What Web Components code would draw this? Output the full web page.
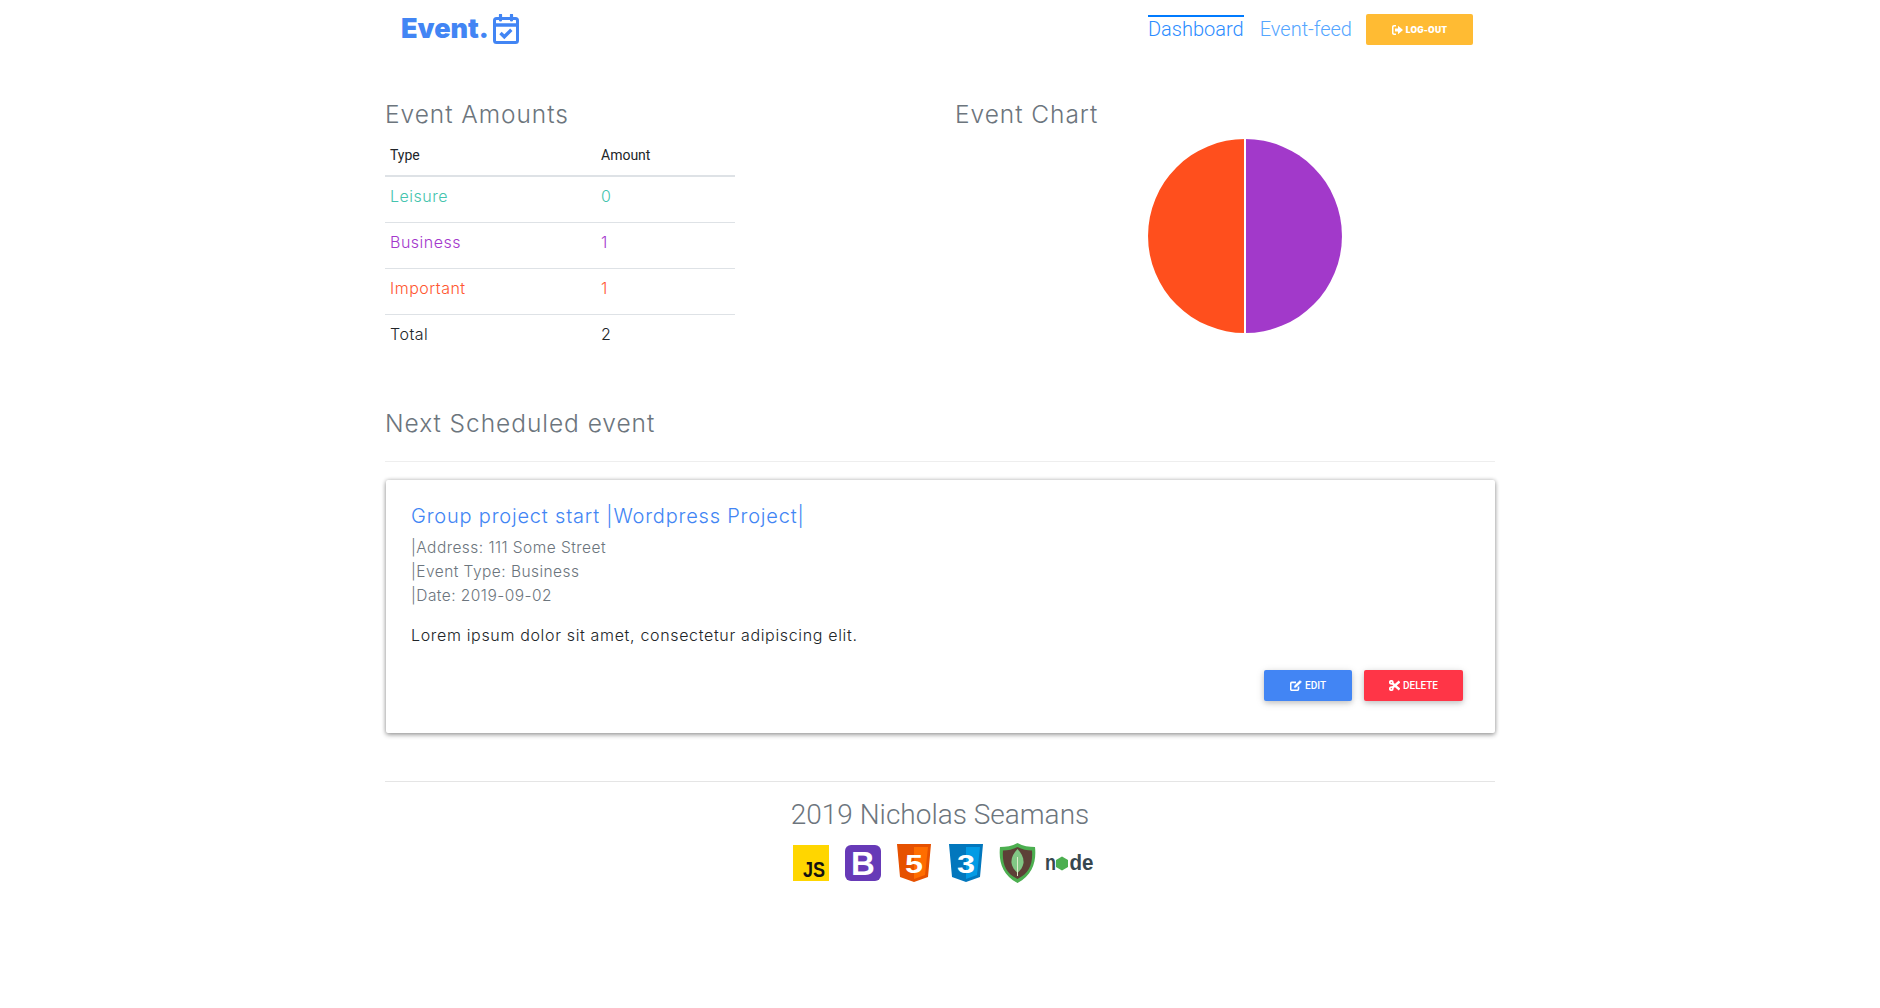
<!DOCTYPE html>
<html lang="en">
<head>
<meta charset="utf-8">
<title>Event.</title>
<style>
  html, body { margin: 0; padding: 0; background: #fff; }
  body { font-family: Inter, "Open Sans", sans-serif; color: #212529; }
</style>
</head>
<body>
<event-page>
  <top-bar slot="top"></top-bar>
  <section-title slot="left">Event Amounts</section-title>
  <amount-table slot="left"></amount-table>
  <section-title slot="right">Event Chart</section-title>
  <pie-chart slot="right"></pie-chart>
  <section-title slot="next">Next Scheduled event</section-title>
  <event-card slot="next">
    <span slot="title">Group project start |Wordpress Project|</span>
    <span slot="meta">|Address: 111 Some Street</span>
    <span slot="meta">|Event Type: Business</span>
    <span slot="meta">|Date: 2019-09-02</span>
    <span slot="body">Lorem ipsum dolor sit amet, consectetur adipiscing elit.</span>
  </event-card>
  <site-footer slot="foot">2019 Nicholas Seamans</site-footer>
</event-page>

<script>
class EventPage extends HTMLElement {
    constructor() {
        super();
        this.root = this.attachShadow({ mode: 'open' });
        this.root.innerHTML = `
            <style>
                :host { display: block; width: 1110px; margin: 0 auto; }
                .cols { display: grid; grid-template-columns: 540px 540px; column-gap: 30px; margin-top: 41px; height: 309px; }
                .next { display: block; }
            </style>
            <slot name="top"></slot>
            <div class="cols">
                <div><slot name="left"></slot></div>
                <div><slot name="right"></slot></div>
            </div>
            <div class="next"><slot name="next"></slot></div>
            <slot name="foot"></slot>
        `;
    }
}

class TopBar extends HTMLElement {
    constructor() {
        super();
        this.root = this.attachShadow({ mode: 'open' });
        this.root.innerHTML = `
            <style>
                :host { display: flex; align-items: center; justify-content: space-between; height: 59px; padding: 0 22px 0 16px; box-sizing: border-box; }
                .logo { display: flex; align-items: center; gap: 4px; color: #4285f4; font: 900 27px Inter, sans-serif; letter-spacing: 0; margin-top: -2px; }
                nav { display: flex; align-items: center; }
                a { font: 300 20px/24px Roboto, sans-serif; border-top: 2px solid transparent; color: #55a6ff; margin-top: -4px; }
                a.on { border-top-color: #007bff; color: #2b8cff; }
                a + a { margin-left: 16px; }
                button { margin-left: 14px; width: 107px; height: 31px; border: 0; border-radius: 2px; background: #ffbb33; color: #fff; font: 900 8.500px Inter, sans-serif; letter-spacing: .2px; display: flex; align-items: center; justify-content: center; gap: 3px; padding: 0; }
            </style>
            <div class="logo">Event.
                <svg width="26" height="30" viewBox="0 0 26 30" fill="none" stroke="#4285f4" stroke-width="3">
                    <rect x="1.500" y="4.500" width="23" height="24" rx="2"/>
                    <path d="M1.500 11h23" stroke-width="3.500"/>
                    <path d="M7.500 1v5M18.500 1v5" stroke-width="3.200" stroke-linecap="round"/>
                    <path d="M7.500 19l3.800 3.800 7-7" stroke-width="3.400"/>
                </svg>
            </div>
            <nav>
                <a class="on">Dashboard</a>
                <a>Event-feed</a>
                <button>
                    <svg width="11" height="10" viewBox="0 0 11 10" fill="#fff"><path d="M4 0H2C.9 0 0 .9 0 2v6c0 1.100.9 2 2 2h2V8.500H2.200c-.4 0-.7-.3-.7-.7V2.200c0-.4.3-.7.7-.7H4zM6 .8v2.700H3v3h3v2.700L11 5z"/></svg>
                    LOG-OUT
                </button>
            </nav>
        `;
    }
}

class SectionTitle extends HTMLElement {
    constructor() {
        super();
        this.root = this.attachShadow({ mode: 'open' });
        this.root.innerHTML = `
            <style>
                :host { display: block; font: 350 24.500px/29px Inter, sans-serif; letter-spacing: .95px; color: #6c757d; }
            </style>
            <slot></slot>
        `;
    }
}

class AmountTable extends HTMLElement {
    constructor() {
        super();
        this.root = this.attachShadow({ mode: 'open' });
        this.rows = [
            ['Leisure', '0', '#45c4ae'],
            ['Business', '1', '#a438cc'],
            ['Important', '1', '#ff5630'],
            ['Total', '2', '#212529']
        ];
        this.root.innerHTML = `
            <style>
                :host { display: block; width: 350px; margin-top: 7px; }
                .row { display: grid; grid-template-columns: 211px 1fr; padding: 0 0 8px 5px; height: 46px; box-sizing: border-box; align-items: center; border-top: 1px solid #dee2e6; font: 350 16px Inter, sans-serif; letter-spacing: .5px; }
                .head { height: 41px; border-top: 0; border-bottom: 2px solid #dee2e6; font: 400 14px Roboto, sans-serif; letter-spacing: 0; padding-bottom: 1px; }
            </style>
            <div class="row head"><span>Type</span><span>Amount</span></div>
            ${this.rows.map((r, i) => `<div class="row" style="color:${r[2]};${i == 0 ? 'border-top:0;height:45px' : ''}"><span>${r[0]}</span><span>${r[1]}</span></div>`).join('')}
        `;
    }
}

class PieChart extends HTMLElement {
    constructor() {
        super();
        this.root = this.attachShadow({ mode: 'open' });
        this.root.innerHTML = `
            <style>
                :host { display: block; margin: 10px 0 0 192px; width: 196px; height: 196px; }
                svg { display: block; }
            </style>
            <svg width="196" height="196" viewBox="0 0 196 196">
                <path d="M98 97V0A97 97 0 0 0 98 194z" fill="#ff4f1d"/>
                <path d="M98 97V0A97 97 0 0 1 98 194z" fill="#a239ca"/>
                <path d="M98 0v194" stroke="#fff" stroke-width="2"/>
            </svg>
        `;
    }
}

class EventCard extends HTMLElement {
    constructor() {
        super();
        this.root = this.attachShadow({ mode: 'open' });
        this.root.innerHTML = `
            <style>
                :host { display: block; }
                hr { border: 0; border-top: 1px solid #eeeeee; margin: 23px 0 18px; }
                .card { border-radius: 2px; box-shadow: 0 2px 5px rgba(0,0,0,.32), 0 0 4px rgba(0,0,0,.22); padding: 24px 32px 32px 25px; height: 253px; box-sizing: border-box; margin-left: 1px; }
                .title { font: 350 20px/24px Inter, sans-serif; letter-spacing: .8px; color: #4285f4; }
                .meta { margin-top: 8px; display: flex; flex-direction: column; font: 350 15.500px/24px Inter, sans-serif; letter-spacing: .45px; color: #6c757d; }
                .meta ::slotted(span) { display: block; }
                .body { margin-top: 15px; font: 350 16px/24px Inter, sans-serif; letter-spacing: .66px; color: #212529; }
                .actions { display: flex; justify-content: flex-end; gap: 12px; margin-top: 23px; }
                button { height: 31px; border: 0; border-radius: 2px; color: #fff; font: 500 10px Roboto, sans-serif; display: flex; align-items: center; justify-content: center; gap: 3px; padding: 0; box-shadow: 0 2px 5px rgba(0,0,0,.16), 0 2px 10px rgba(0,0,0,.12); }
                .edit { width: 88px; background: #4285f4; }
                .del { width: 99px; background: #ff3547; }
            </style>
            <hr>
            <div class="card">
                <div class="title"><slot name="title"></slot></div>
                <div class="meta"><slot name="meta"></slot></div>
                <div class="body"><slot name="body"></slot></div>
                <div class="actions">
                    <button class="edit">
                        <svg width="12" height="11" viewBox="0 0 12 11" fill="none" stroke="#fff" stroke-width="1.600"><path d="M8.500 6.500V9c0 .8-.5 1.300-1.300 1.300H2C1.200 10.300.7 9.800.7 9V3.700c0-.8.5-1.300 1.300-1.300h4"/><path d="M4.300 7.500V6L10 .4l1.600 1.600L5.700 7.500z" fill="#fff" stroke-width=".4"/></svg>
                        EDIT
                    </button>
                    <button class="del">
                        <svg width="11" height="11" viewBox="0 0 11 11" fill="none" stroke="#fff" stroke-width="1.800"><circle cx="2.300" cy="2.300" r="1.500"/><circle cx="2.300" cy="8.700" r="1.500"/><path d="M3.500 3.300L10.500 9.500M3.500 7.700L10.500 1.500" stroke-width="2.400"/></svg>
                        DELETE
                    </button>
                </div>
            </div>
        `;
    }
}

class SiteFooter extends HTMLElement {
    constructor() {
        super();
        this.root = this.attachShadow({ mode: 'open' });
        this.root.innerHTML = `
            <style>
                :host { display: block; text-align: center; }
                hr { border: 0; border-top: 1px solid #e5e5e5; margin: 48px 0 0; }
                h2 { margin: 16px 0 0; font: 300 28px/34px Roboto, sans-serif; color: #6c757d; }
                tech-icons { margin-top: 10px; }
            </style>
            <hr>
            <h2><slot></slot></h2>
            <tech-icons></tech-icons>
        `;
    }
}

class TechIcons extends HTMLElement {
    constructor() {
        super();
        this.root = this.attachShadow({ mode: 'open' });
        this.root.innerHTML = `
            <style>
                :host { display: flex; justify-content: center; align-items: center; height: 42px; padding-left: 6px; }
                svg { display: block; margin-left: 16px; overflow: visible; }
                svg:first-of-type { margin-left: 0; }
                .css { margin-left: 18px; }
                .node { margin-left: 9px; }
                text { font-family: "Liberation Sans", Arial, sans-serif; font-weight: 700; }
            </style>
            <svg width="36" height="36" viewBox="0 0 36 36">
                <rect width="36" height="36" fill="#ffd600"/>
                <text x="10" y="32" font-size="22" fill="#111" textLength="22" lengthAdjust="spacingAndGlyphs">JS</text>
            </svg>
            <svg width="36" height="36" viewBox="0 0 36 36">
                <rect width="36" height="36" rx="6" fill="#673ab7"/>
                <text x="18" y="30" text-anchor="middle" font-size="33" fill="#fff">B</text>
            </svg>
            <svg width="34" height="38" viewBox="0 0 34 38">
                <path d="M0 0h34l-3 33-14 5-14-5z" fill="#e65100"/>
                <path d="M17 3v32l11-4 3-28z" fill="#ff6d00"/>
                <text x="8" y="29" font-size="26" fill="#fff" textLength="18" lengthAdjust="spacingAndGlyphs">5</text>
            </svg>
            <svg class="css" width="34" height="38" viewBox="0 0 34 38">
                <path d="M0 0h34l-3 33-14 5-14-5z" fill="#0277bd"/>
                <path d="M17 3v32l11-4 3-28z" fill="#039be5"/>
                <text x="8" y="29" font-size="26" fill="#fff" textLength="18" lengthAdjust="spacingAndGlyphs">3</text>
            </svg>
            <svg width="37" height="40" viewBox="0 0 37 40">
                <path d="M18.500 0C24 3 30 4 36 4c1.500 14-2 28-17.500 36C3 32-.5 18 1 4c6 0 12-1 17.500-4z" fill="#4caf50"/>
                <path d="M18.500 4C23 6.500 28 7.500 33 7.500c1 12-2 23-14.500 28.500C6 30.500 3 19.500 4 7.500 9 7.500 14 6.500 18.500 4z" fill="#5d4037"/>
                <path d="M18.500 6c4 4 6.500 9 6 14-.5 4-3 7-6 10-3-3-5.500-6-6-10-.5-5 2-10 6-14z" fill="#81c784"/>
                <path d="M18 14h1v19h-1z" fill="#dcedc8"/>
            </svg>
            <svg class="node" width="49" height="32" viewBox="0 0 49 32">
                <text x="0" y="23" font-size="22" fill="#37474f" textLength="11" lengthAdjust="spacingAndGlyphs">n</text>
                <path d="M17 9.500l6 3.400v7.200l-6 3.400-6-3.400v-7.200z" fill="#4caf50"/>
                <text x="24.500" y="23" font-size="22" fill="#37474f" textLength="24" lengthAdjust="spacingAndGlyphs">de</text>
            </svg>
        `;
    }
}

customElements.define('tech-icons', TechIcons);
customElements.define('section-title', SectionTitle);
customElements.define('top-bar', TopBar);
customElements.define('amount-table', AmountTable);
customElements.define('pie-chart', PieChart);
customElements.define('event-card', EventCard);
customElements.define('site-footer', SiteFooter);
customElements.define('event-page', EventPage);
</script>
</body>
</html>
